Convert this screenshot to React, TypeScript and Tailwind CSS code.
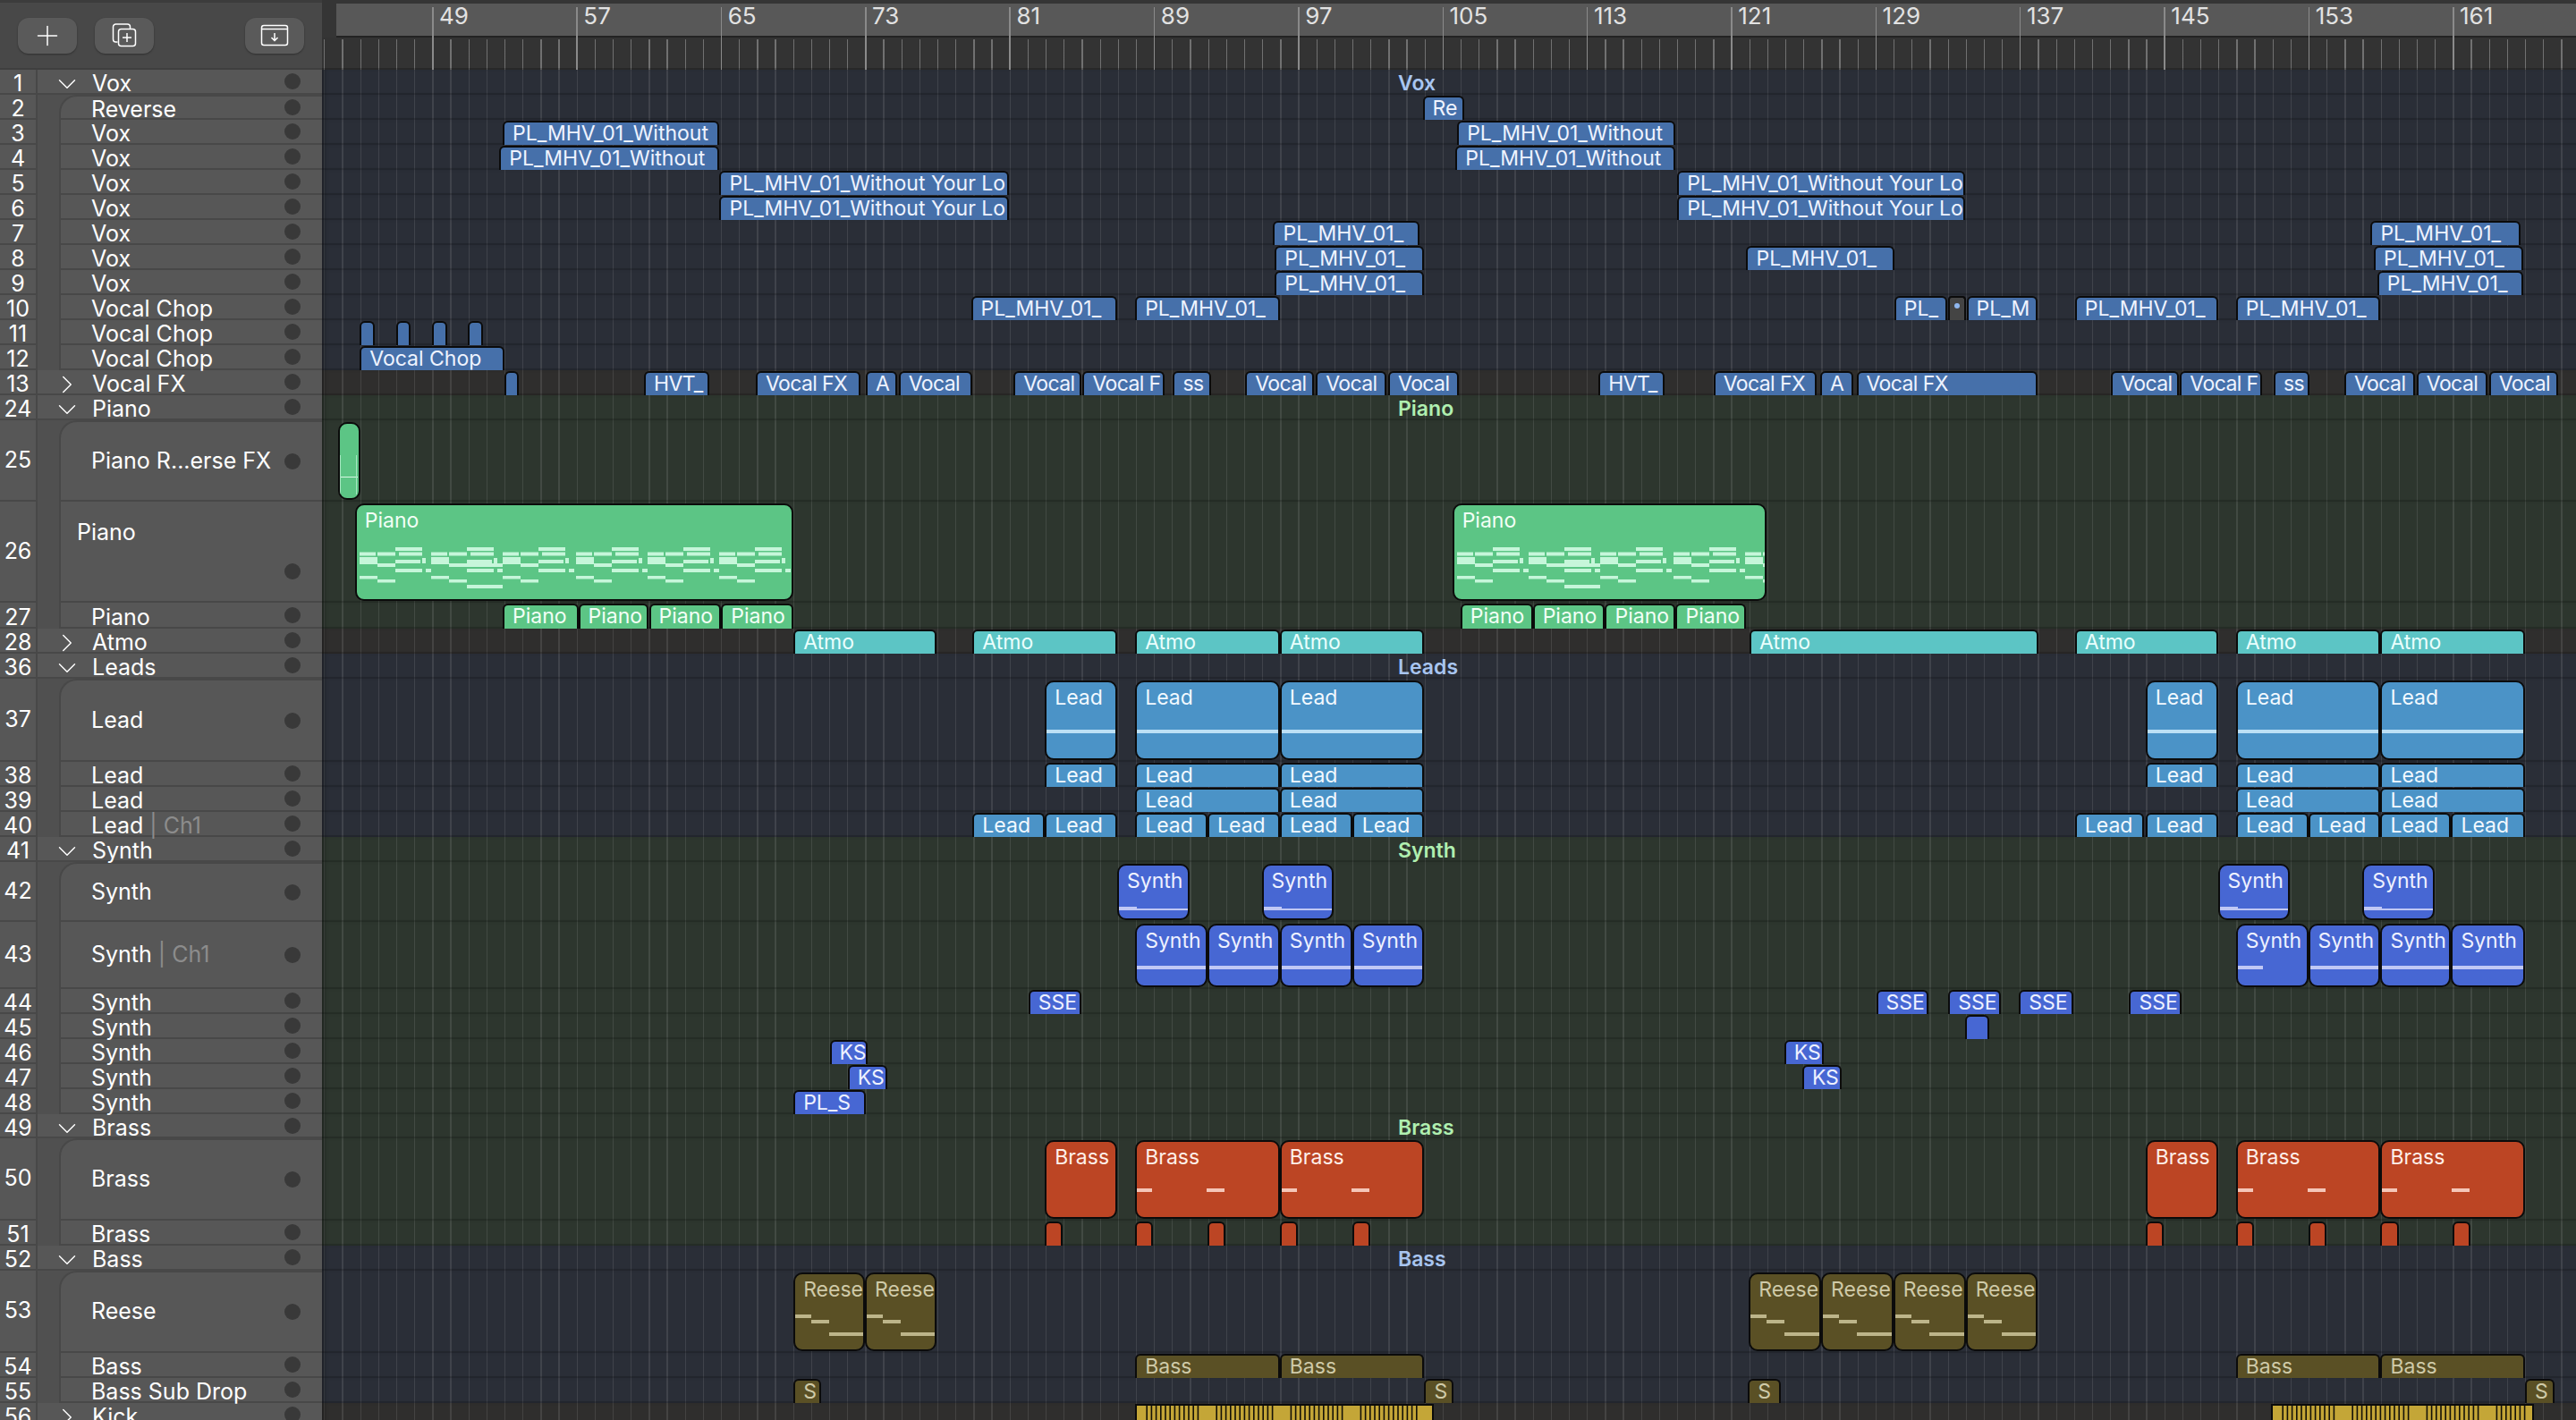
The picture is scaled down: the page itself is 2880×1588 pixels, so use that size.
import React from 'react';
import { ChevronDown, ChevronRight, Plus } from 'lucide-react';

type NoteKind = 'lead' | 'synthA' | 'synthB' | 'synthShort' | 'brass' | 'reese' | 'piano' | 'sweep';
type Clip = [number, number, string?, NoteKind?];
type Row = {
	n: number;
	label: string;
	suffix?: string;
	h?: string;
	child?: boolean;
	first?: boolean;
	fold?: 'down' | 'right';
	lane: 'blue' | 'green' | 'gray';
	color?: keyof typeof clipColors;
	tall?: boolean;
	tight?: boolean;
	clips?: Clip[];
	title?: string;
	split?: boolean;
};

// clip edges are taken from the 1568 wide view of the arrange window
const px = (v: number) => v * (2880 / 1568) - 360;

const clipColors = {
	blue: 'bg-[#4670aa] text-[#eef3ff]',
	green: 'bg-[#5cc585] text-[#f2fff6]',
	teal: 'bg-[#5cc5c5] text-[#eafffd]',
	lead: 'bg-[#4b93c7] text-[#f2f9ff]',
	synth: 'bg-[#4767d3] text-[#eef1ff]',
	brass: 'bg-[#bc4524] text-[#fff0ea]',
	olive: 'bg-[#5a5025] text-[#cfcaa8]',
};

const laneColors = {
	blue: 'bg-[#2a2e37]',
	green: 'bg-[#2d362e]',
	gray: 'bg-[#2f2e2d]',
};

const pl = 'PL_MHV_01_Without';
const plLong = 'PL_MHV_01_Without Your Lo';
const plShort = 'PL_MHV_01_';

const rows: Row[] = [
	{ n: 1, label: 'Vox', fold: 'down', lane: 'blue', title: 'Vox' },
	{ n: 2, label: 'Reverse', child: true, first: true, lane: 'blue', color: 'blue', clips: [[866, 891, 'Re']] },
	{ n: 3, label: 'Vox', child: true, lane: 'blue', color: 'blue', clips: [[306, 438, pl], [887, 1020, pl]] },
	{ n: 4, label: 'Vox', child: true, lane: 'blue', color: 'blue', clips: [[304, 438, pl], [886, 1020, pl]] },
	{ n: 5, label: 'Vox', child: true, lane: 'blue', color: 'blue', clips: [[438, 614, plLong], [1021, 1196, plLong]] },
	{ n: 6, label: 'Vox', child: true, lane: 'blue', color: 'blue', clips: [[438, 614, plLong], [1021, 1196, plLong]] },
	{ n: 7, label: 'Vox', child: true, lane: 'blue', color: 'blue', clips: [[775, 864, plShort], [1443, 1534, plShort]] },
	{ n: 8, label: 'Vox', child: true, lane: 'blue', color: 'blue', clips: [[776, 867, plShort], [1063, 1153, plShort], [1445, 1536, plShort]] },
	{ n: 9, label: 'Vox', child: true, lane: 'blue', color: 'blue', clips: [[776, 867, plShort], [1447, 1536, plShort]] },
	{
		n: 10, label: 'Vocal Chop', child: true, lane: 'blue', color: 'blue',
		clips: [[591, 680, plShort], [691, 779, plShort], [1153, 1185, 'PL_'], [1197, 1240, 'PL_M'], [1263, 1350, plShort], [1361, 1449, plShort]],
	},
	{ n: 11, label: 'Vocal Chop', child: true, lane: 'blue', color: 'blue', clips: [[219, 228], [241, 250], [263, 272], [285, 294]] },
	{ n: 12, label: 'Vocal Chop', child: true, lane: 'blue', color: 'blue', clips: [[219, 307, 'Vocal Chop']] },
	{
		n: 13, label: 'Vocal FX', fold: 'right', lane: 'gray', color: 'blue', tight: true,
		clips: [
			[307, 316], [392, 432, 'HVT_'], [460, 524, 'Vocal FX'], [527, 546, 'A'], [547, 592, 'Vocal'], [617, 658, 'Vocal'],
			[659, 709, 'Vocal F'], [714, 737, 'ss'], [758, 800, 'Vocal'], [801, 844, 'Vocal'], [845, 888, 'Vocal'],
			[973, 1013, 'HVT_'], [1043, 1106, 'Vocal FX'], [1108, 1128, 'A'], [1130, 1240, 'Vocal FX'], [1285, 1326, 'Vocal'],
			[1327, 1377, 'Vocal F'], [1384, 1406, 'ss'], [1427, 1470, 'Vocal'], [1471, 1514, 'Vocal'], [1515, 1557, 'Vocal'],
		],
	},
	{ n: 24, label: 'Piano', fold: 'down', lane: 'green', title: 'Piano' },
	{ n: 25, label: 'Piano R...erse FX', h: 'h-[91px]', child: true, first: true, lane: 'green', color: 'green', tall: true, clips: [[206, 219.5, undefined, 'sweep']] },
	{ n: 26, label: 'Piano', h: 'h-[113px]', child: true, split: true, lane: 'green', color: 'green', tall: true, clips: [[216, 483, 'Piano', 'piano'], [884, 1075.5, 'Piano', 'piano']] },
	{
		n: 27, label: 'Piano', h: 'h-[29px]', child: true, lane: 'green', color: 'green',
		clips: [[306, 352, 'Piano'], [352, 395, 'Piano'], [395, 439, 'Piano'], [439, 483, 'Piano'], [889, 933, 'Piano'], [933, 977, 'Piano'], [977, 1020, 'Piano'], [1020, 1063, 'Piano']],
	},
	{
		n: 28, label: 'Atmo', fold: 'right', lane: 'gray', color: 'teal',
		clips: [[483, 570, 'Atmo'], [592, 680, 'Atmo'], [691, 779, 'Atmo'], [779, 867, 'Atmo'], [1065, 1241, 'Atmo'], [1263, 1350, 'Atmo'], [1361, 1449, 'Atmo'], [1449, 1537, 'Atmo']],
	},
	{ n: 36, label: 'Leads', fold: 'down', lane: 'blue', title: 'Leads' },
	{
		n: 37, label: 'Lead', h: 'h-[93px]', child: true, first: true, lane: 'blue', color: 'lead', tall: true,
		clips: [[636, 680, 'Lead', 'lead'], [691, 779, 'Lead', 'lead'], [779, 867, 'Lead', 'lead'], [1306, 1350, 'Lead', 'lead'], [1361, 1449, 'Lead', 'lead'], [1449, 1537, 'Lead', 'lead']],
	},
	{
		n: 38, label: 'Lead', child: true, lane: 'blue', color: 'lead',
		clips: [[636, 680, 'Lead'], [691, 779, 'Lead'], [779, 867, 'Lead'], [1306, 1350, 'Lead'], [1361, 1449, 'Lead'], [1449, 1537, 'Lead']],
	},
	{ n: 39, label: 'Lead', child: true, lane: 'blue', color: 'lead', clips: [[691, 779, 'Lead'], [779, 867, 'Lead'], [1361, 1449, 'Lead'], [1449, 1537, 'Lead']] },
	{
		n: 40, label: 'Lead', suffix: 'Ch1', child: true, lane: 'blue', color: 'lead',
		clips: [
			[592, 636, 'Lead'], [636, 680, 'Lead'], [691, 735, 'Lead'], [735, 779, 'Lead'], [779, 823, 'Lead'], [823, 867, 'Lead'],
			[1263, 1305, 'Lead'], [1306, 1350, 'Lead'], [1361, 1405, 'Lead'], [1405, 1449, 'Lead'], [1449, 1492, 'Lead'], [1492, 1537, 'Lead'],
		],
	},
	{ n: 41, label: 'Synth', fold: 'down', lane: 'green', title: 'Synth' },
	{
		n: 42, label: 'Synth', h: 'h-[67px]', child: true, first: true, lane: 'green', color: 'synth', tall: true,
		clips: [[680, 724, 'Synth', 'synthA'], [768, 812, 'Synth', 'synthA'], [1350, 1394, 'Synth', 'synthA'], [1438, 1482, 'Synth', 'synthA']],
	},
	{
		n: 43, label: 'Synth', suffix: 'Ch1', h: 'h-[75px]', child: true, lane: 'green', color: 'synth', tall: true,
		clips: [
			[691, 735, 'Synth', 'synthB'], [735, 779, 'Synth', 'synthB'], [779, 823, 'Synth', 'synthB'], [823, 867, 'Synth', 'synthB'],
			[1361, 1405, 'Synth', 'synthShort'], [1405, 1449, 'Synth', 'synthB'], [1449, 1492, 'Synth', 'synthB'], [1492, 1537, 'Synth', 'synthB'],
		],
	},
	{ n: 44, label: 'Synth', child: true, lane: 'green', color: 'synth', clips: [[626, 658, 'SSE'], [1142, 1174, 'SSE'], [1186, 1218, 'SSE'], [1229, 1262, 'SSE'], [1296, 1328, 'SSE']] },
	{ n: 45, label: 'Synth', child: true, lane: 'green', color: 'synth', clips: [[1196, 1211]] },
	{ n: 46, label: 'Synth', child: true, lane: 'green', color: 'synth', clips: [[505, 528, 'KS'], [1086, 1110, 'KS']] },
	{ n: 47, label: 'Synth', child: true, lane: 'green', color: 'synth', clips: [[516, 540, 'KS'], [1097, 1121, 'KS']] },
	{ n: 48, label: 'Synth', child: true, lane: 'green', color: 'synth', clips: [[483, 527, 'PL_S']] },
	{ n: 49, label: 'Brass', h: 'h-[27px]', fold: 'down', lane: 'green', title: 'Brass' },
	{
		n: 50, label: 'Brass', h: 'h-[92px]', child: true, first: true, lane: 'green', color: 'brass', tall: true,
		clips: [[636, 680, 'Brass'], [691, 779, 'Brass', 'brass'], [779, 867, 'Brass', 'brass'], [1306, 1350, 'Brass'], [1361, 1449, 'Brass', 'brass'], [1449, 1537, 'Brass', 'brass']],
	},
	{
		n: 51, label: 'Brass', child: true, lane: 'green', color: 'brass',
		clips: [[636, 647], [691, 702], [735, 746], [779, 790], [823, 834], [1306, 1317], [1361, 1372], [1405, 1416], [1449, 1460], [1493, 1504]],
	},
	{ n: 52, label: 'Bass', fold: 'down', lane: 'blue', title: 'Bass' },
	{
		n: 53, label: 'Reese', h: 'h-[92px]', child: true, first: true, lane: 'blue', color: 'olive', tall: true,
		clips: [[483, 526.5, 'Reese', 'reese'], [526.5, 570, 'Reese', 'reese'], [1064.5, 1108.5, 'Reese', 'reese'], [1108.5, 1152.5, 'Reese', 'reese'], [1152.5, 1196.5, 'Reese', 'reese'], [1196.5, 1240, 'Reese', 'reese']],
	},
	{ n: 54, label: 'Bass', child: true, lane: 'blue', color: 'olive', clips: [[691, 779, 'Bass'], [779, 867, 'Bass'], [1361, 1449, 'Bass'], [1449, 1537, 'Bass']] },
	{ n: 55, label: 'Bass Sub Drop', child: true, lane: 'blue', color: 'olive', clips: [[483, 500, 'S'], [867, 885, 'S'], [1064, 1084, 'S'], [1537, 1555, 'S']] },
	{ n: 56, label: 'Kick', fold: 'right', lane: 'gray' },
];

const gridLines =
	'bg-[repeating-linear-gradient(90deg,transparent_0,transparent_2.2px,rgba(255,255,255,0.1)_2.2px,rgba(255,255,255,0.1)_3.5px,transparent_3.5px,transparent_20.17px)]';

const rulerTicks =
	'bg-[repeating-linear-gradient(90deg,transparent_0,transparent_2.2px,rgba(255,255,255,0.3)_2.2px,rgba(255,255,255,0.3)_3.5px,transparent_3.5px,transparent_20.17px)]';

const rulerBars = [49, 57, 65, 73, 81, 89, 97, 105, 113, 121, 129, 137, 145, 153, 161];

// one phrase of the piano region, 80px long
const pianoNotes = [
	[40, 1, 30, 4], [0, 6.5, 18, 4], [20, 6.5, 20, 4], [44, 6.5, 26, 4], [0, 12, 20, 8], [40, 15, 28, 4], [20, 19, 20, 4],
	[40, 25, 30, 4], [74, 25, 6, 4], [70, 13, 4, 6], [0, 33, 20, 3.5], [20, 37, 20, 3.5],
];

const PianoRoll = () => (
	<svg className="absolute left-[3px] top-[46px]" width="486" height="48">
		{[0, 80, 160, 242, 322, 402].map((start, p) => (
			<g key={start} transform={`translate(${start} 0)`} fill="#c6f6da">
				{pianoNotes.map(([x, y, w, h], i) => (
					<rect key={i} x={x} y={y} width={w} height={h} />
				))}
				{p === 1 && (
					<>
						<rect x={40} y={43} width={40} height={4} />
						<rect x={40} y={19} width={40} height={4} />
					</>
				)}
			</g>
		))}
	</svg>
);

const Notes = ({ kind }: { kind?: NoteKind }) => {
	switch (kind) {
		case 'lead':
			return <div className="absolute inset-x-0 top-[53px] h-[4px] bg-[#bce0f5]" />;
		case 'synthA':
			return (
				<>
					<div className="absolute left-0 top-[46px] h-[4px] w-[20px] bg-[#c0c8f5]" />
					<div className="absolute inset-x-0 top-[48px] h-[2px] bg-[#c0c8f5]" />
				</>
			);
		case 'synthB':
			return <div className="absolute inset-x-0 top-[45px] h-[4px] bg-[#c0c8f5]" />;
		case 'synthShort':
			return <div className="absolute left-0 top-[45px] h-[4px] w-[28px] bg-[#c0c8f5]" />;
		case 'brass':
			return (
				<>
					<div className="absolute left-0 top-[52px] h-[4px] w-[17px] bg-[#f5c6b8]" />
					<div className="absolute left-[78px] top-[52px] h-[4px] w-[20px] bg-[#f5c6b8]" />
				</>
			);
		case 'reese':
			return (
				<>
					<div className="absolute left-0 top-[45px] h-[4px] w-[18px] bg-[#bdb58a]" />
					<div className="absolute left-[18px] top-[51px] h-[4px] w-[20px] bg-[#bdb58a]" />
					<div className="absolute left-[38px] right-0 top-[65px] h-[4px] bg-[#bdb58a]" />
				</>
			);
		case 'piano':
			return <PianoRoll />;
		case 'sweep':
			return (
				<>
					<div className="absolute left-0 top-[59px] h-[1px] w-[20px] bg-[#d8f8e4]" />
					<div className="absolute right-[2px] top-[35px] h-[44px] w-[1px] bg-[#a5e6c0]" />
					<div className="absolute left-0 top-[35px] h-[44px] w-[1px] bg-[#a5e6c0]" />
				</>
			);
		default:
			return null;
	}
};

const ClipBox = ({ clip, row }: { clip: Clip; row: Row }) => {
	const [from, to, label, notes] = clip;
	const shape = row.tall
		? 'top-[2px] bottom-[2px] rounded-[10px] border-2 pt-[5px]'
		: 'top-[1px] bottom-0 rounded-t-[6px] border-2 border-b-0';
	return (
		<div
			className={`absolute box-border overflow-hidden whitespace-nowrap border-[#0b0b0b] pl-[9px] text-[23px] leading-[25px] ${row.tight ? 'tracking-[-0.6px]' : ''} ${shape} ${clipColors[row.color ?? 'blue']}`}
			style={{ left: px(from), width: px(to) - px(from) }}
		>
			{label}
			<Notes kind={notes} />
		</div>
	);
};

const KickStrip = ({ left, width }: { left: number; width: number }) => {
	const lines: number[] = [];
	for (let x = 2; x < width - 10; x += 5.2) {
		if ((x + 8) % 81 < 16) continue;
		lines.push(x);
	}
	return (
		<svg className="absolute top-[1px]" style={{ left }} width={width} height="20">
			<rect width={width} height="20" fill="#c4a637" />
			<rect width={width} height="2" fill="#0b0b0b" />
			<rect width="2" height="20" fill="#0b0b0b" />
			<rect x={width - 2} width="2" height="20" fill="#0b0b0b" />
			{lines.map((x) => (
				<rect key={x} x={x} y="2" width="1.6" height="18" fill="#141208" />
			))}
		</svg>
	);
};

const TrackRow = ({ row }: { row: Row }) => {
	const nudge = row.tall ? '' : 'translate-y-[3px]';
	return (
		<div className={`flex shrink-0 ${row.h ?? 'h-[28px]'}`}>
			<div className="flex w-[42px] shrink-0 items-center justify-center border-r-2 border-b-2 border-[#484848] bg-[#575757] text-[25px] text-white">
				<span className={nudge}>{row.n}</span>
			</div>
			<div className="flex w-[318px] shrink-0 bg-[#505050]">
				{row.child && <div className="w-[24px] shrink-0" />}
				<div
					className={`flex min-w-0 flex-1 items-center border-b-2 border-[#484848] bg-[#575757] text-[25px] text-white ${row.child ? 'border-l-2' : ''} ${row.first ? 'rounded-tl-[20px] border-t-2' : ''}`}
				>
					{row.fold && (
						<div className={`ml-[16px] mr-[11px] flex w-[34px] shrink-0 items-center justify-center ${nudge}`}>
							{row.fold === 'down' ? (
								<ChevronDown size={36} strokeWidth={1} className="-my-[10px]" />
							) : (
								<ChevronRight size={36} strokeWidth={1} className="-my-[10px]" />
							)}
						</div>
					)}
					{row.split ? (
						<>
							<span className="mt-[20px] self-start pl-[18px] leading-[28px]">{row.label}</span>
							<span className="mb-[24px] ml-auto mr-[24px] size-[18px] shrink-0 self-end rounded-full bg-[#393939]" />
						</>
					) : (
						<>
							<span className={`whitespace-nowrap ${nudge} ${row.child ? 'pl-[34px]' : ''}`}>
								{row.label}
								{row.suffix && <span className="text-[#8c8c8c]"> | {row.suffix}</span>}
							</span>
							<span className="ml-auto mr-[24px] size-[18px] shrink-0 rounded-full bg-[#393939]" />
						</>
					)}
				</div>
			</div>
			<div className={`relative flex-1 shadow-[inset_5px_0_4px_-2px_rgba(0,0,0,0.3)] ${laneColors[row.lane]} ${gridLines}`}>
				<div className="absolute inset-x-0 bottom-0 h-[2px] bg-black/15" />
				{row.title && (
					<span
						className={`absolute left-[1203px] top-[2px] text-[23px] font-semibold leading-[27px] ${row.lane === 'green' ? 'text-[#b0efb0]' : 'text-[#a8c5f0]'}`}
					>
						{row.title}
					</span>
				)}
				{row.clips?.map((clip) => (
					<ClipBox key={clip[0]} clip={clip} row={row} />
				))}
				{row.n === 10 && (
					<div className="absolute bottom-0 left-[1818px] top-[1px] flex w-[20px] justify-center rounded-t-[4px] border-2 border-b-0 border-[#0b0b0b] bg-[#444444] pt-[6px]">
						<span className="size-[6px] rounded-full bg-[#8fb6ee]" />
					</div>
				)}
				{row.n === 56 && (
					<>
						<KickStrip left={909} width={334} />
						<KickStrip left={2179} width={294} />
					</>
				)}
			</div>
		</div>
	);
};

const ToolButton = ({ children, className = '' }: { children: React.ReactNode; className?: string }) => (
	<div className={`flex h-[40px] w-[66px] items-center justify-center rounded-[12px] bg-[#5a5a5a] text-white shadow-[0_1px_2px_rgba(0,0,0,0.35)] ${className}`}>
		{children}
	</div>
);

const Header = () => (
	<div className="flex h-[78px] shrink-0">
		<div className="flex w-[360px] shrink-0 gap-[20px] border-t-[3px] border-b-2 border-t-[#3c3c3c] border-b-[#3f3f3f] bg-[#484848] px-[20px] pt-[17px]">
			<ToolButton>
				<Plus size={36} strokeWidth={1} />
			</ToolButton>
			<ToolButton>
				<svg width="30" height="28" viewBox="1.5 0 30 28" fill="none" stroke="white" strokeWidth="1.5">
					<path d="M9 21H7a3 3 0 0 1-3-3V4a3 3 0 0 1 3-3h13a3 3 0 0 1 3 3v2" />
					<rect x="10" y="6.5" width="19" height="19" rx="3" />
					<path d="M19.5 11v10M14.5 16h10" />
				</svg>
			</ToolButton>
			<ToolButton className="ml-auto">
				<svg width="32" height="26" viewBox="0 0 32 26" fill="none" stroke="white" strokeWidth="1.5">
					<rect x="1.5" y="1.5" width="29" height="22" rx="2.5" />
					<path d="M1.5 5.5h29M16 10v8.5M12.5 15l3.5 3.5 3.5-3.5" />
				</svg>
			</ToolButton>
		</div>
		<div className="relative flex-1 overflow-hidden bg-[#333333]">
			<div className={`absolute inset-x-0 bottom-0 top-[44px] ${rulerTicks}`} />
			<div className="absolute inset-x-0 top-0 h-[42px] bg-[#353535]" />
			<div className="absolute inset-x-0 bottom-0 h-[2px] bg-black/20" />
			<div className="absolute left-[16px] right-0 top-[4px] h-[38px] border-b-2 border-[#232323] bg-[#585858]" />
			{rulerBars.map((bar) => {
				const left = 123 + ((bar - 49) / 8) * 161.36;
				return (
					<div key={bar} className="absolute bottom-0 top-[8px]" style={{ left }}>
						<div className="h-full w-[1.5px] bg-[#8a8a8a]" />
						<span className="absolute left-[8px] top-[-3px] text-[26px] leading-[26px] text-[#e2e2e2]">{bar}</span>
					</div>
				);
			})}
		</div>
	</div>
);

export default function App() {
	return (
		<div className="flex h-[1588px] w-[2880px] flex-col overflow-hidden bg-[#2a2e37] font-['Inter',sans-serif]">
			<Header />
			{rows.map((row) => (
				<TrackRow key={row.n} row={row} />
			))}
		</div>
	);
}
